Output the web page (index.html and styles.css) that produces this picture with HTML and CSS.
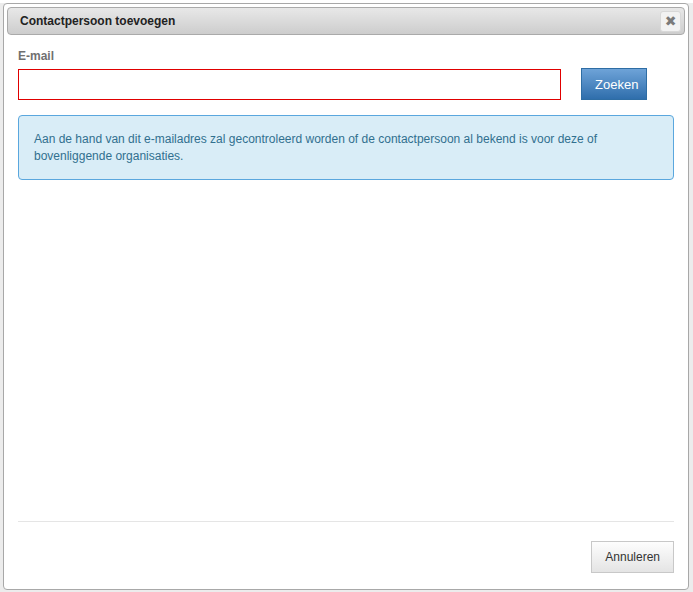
FILE: index.html
```html
<!DOCTYPE html>
<html lang="nl">
<head>
    <meta charset="UTF-8">
    <title>Contactpersoon toevoegen</title>
    <link rel="stylesheet" href="styles.css">
</head>
<body>
    <div class="dialog">
        <div class="dialog-title">
            <span class="title-text">Contactpersoon toevoegen</span>
            <button class="close-btn" title="Sluiten">&#10006;</button>
        </div>
        <div class="dialog-content">
            <label class="field-label" for="email">E-mail</label>
            <div class="search-row">
                <input id="email" class="field-input" type="text">
                <button class="btn btn-primary">Zoeken</button>
            </div>
            <div class="alert-info">
                Aan de hand van dit e-mailadres zal gecontroleerd worden of de contactpersoon al bekend is voor deze of bovenliggende organisaties.
            </div>
        </div>
        <div class="dialog-footer">
            <button class="btn btn-default">Annuleren</button>
        </div>
    </div>
</body>
</html>
```

FILE: styles.css
```css
html, body {
    margin: 0;
    height: 100%;
}
body {
    padding: 3px 0 0 3px;
    box-sizing: border-box;
    font-family: "Liberation Sans", Arial, sans-serif;
    font-size: 12px;
    background: linear-gradient(to bottom, #fff 0, #fff 3px, #ececec 3px);
}
.dialog {
    width: 686px;
    height: 587px;
    box-sizing: border-box;
    border: 1px solid #a8a8a8;
    border-radius: 4px;
    padding: 3px;
    background: #fff;
    display: flex;
    flex-direction: column;
}
.dialog-title {
    height: 28px;
    box-sizing: border-box;
    border: 1px solid #aaa;
    border-radius: 4px;
    background: linear-gradient(to bottom, #e8e8e8, #cdcdcd);
    display: flex;
    align-items: center;
    justify-content: space-between;
    padding: 0 3px 0 12px;
}
.title-text {
    font-weight: bold;
    color: #222;
}
.close-btn {
    width: 21px;
    height: 21px;
    padding: 0;
    border: 1px solid #d8d8d8;
    border-radius: 3px;
    background: #f2f2f2;
    color: #7a7a7a;
    font-size: 14px;
    font-weight: bold;
    line-height: 19px;
    font-family: "DejaVu Sans", sans-serif;
    cursor: pointer;
}
.dialog-content {
    flex: 1;
    padding: 14px 11px 0;
}
.field-label {
    display: block;
    font-weight: bold;
    color: #707070;
    margin-bottom: 5px;
}
.search-row {
    display: flex;
    align-items: flex-start;
    gap: 20px;
}
.field-input {
    width: 543px;
    height: 31px;
    box-sizing: border-box;
    border: 1px solid #e00000;
    margin: 1px 0 0;
    padding: 4px 6px;
    font: inherit;
    outline: none;
}
.btn {
    height: 32px;
    box-sizing: border-box;
    padding: 0 13px;
    font: inherit;
    font-size: 12px;
    cursor: pointer;
}
.btn-primary {
    width: 66px;
    border: 1px solid #2e6da4;
    background: linear-gradient(to bottom, #6ea3d8, #2f6eac);
    color: #fff;
    font-size: 13px;
}
.btn-default {
    border: 1px solid #c8c8c8;
    background: linear-gradient(to bottom, #fdfdfd, #e4e4e4);
    color: #333;
}
.alert-info {
    margin-top: 15px;
    padding: 15px 15px 14px;
    border: 1px solid #5aa7de;
    border-radius: 4px;
    background: #d9edf7;
    color: #31708f;
    line-height: 17px;
}
.dialog-footer {
    margin: 0 11px;
    border-top: 1px solid #e5e5e5;
    padding: 19px 0 13px;
    display: flex;
    justify-content: flex-end;
}
```
